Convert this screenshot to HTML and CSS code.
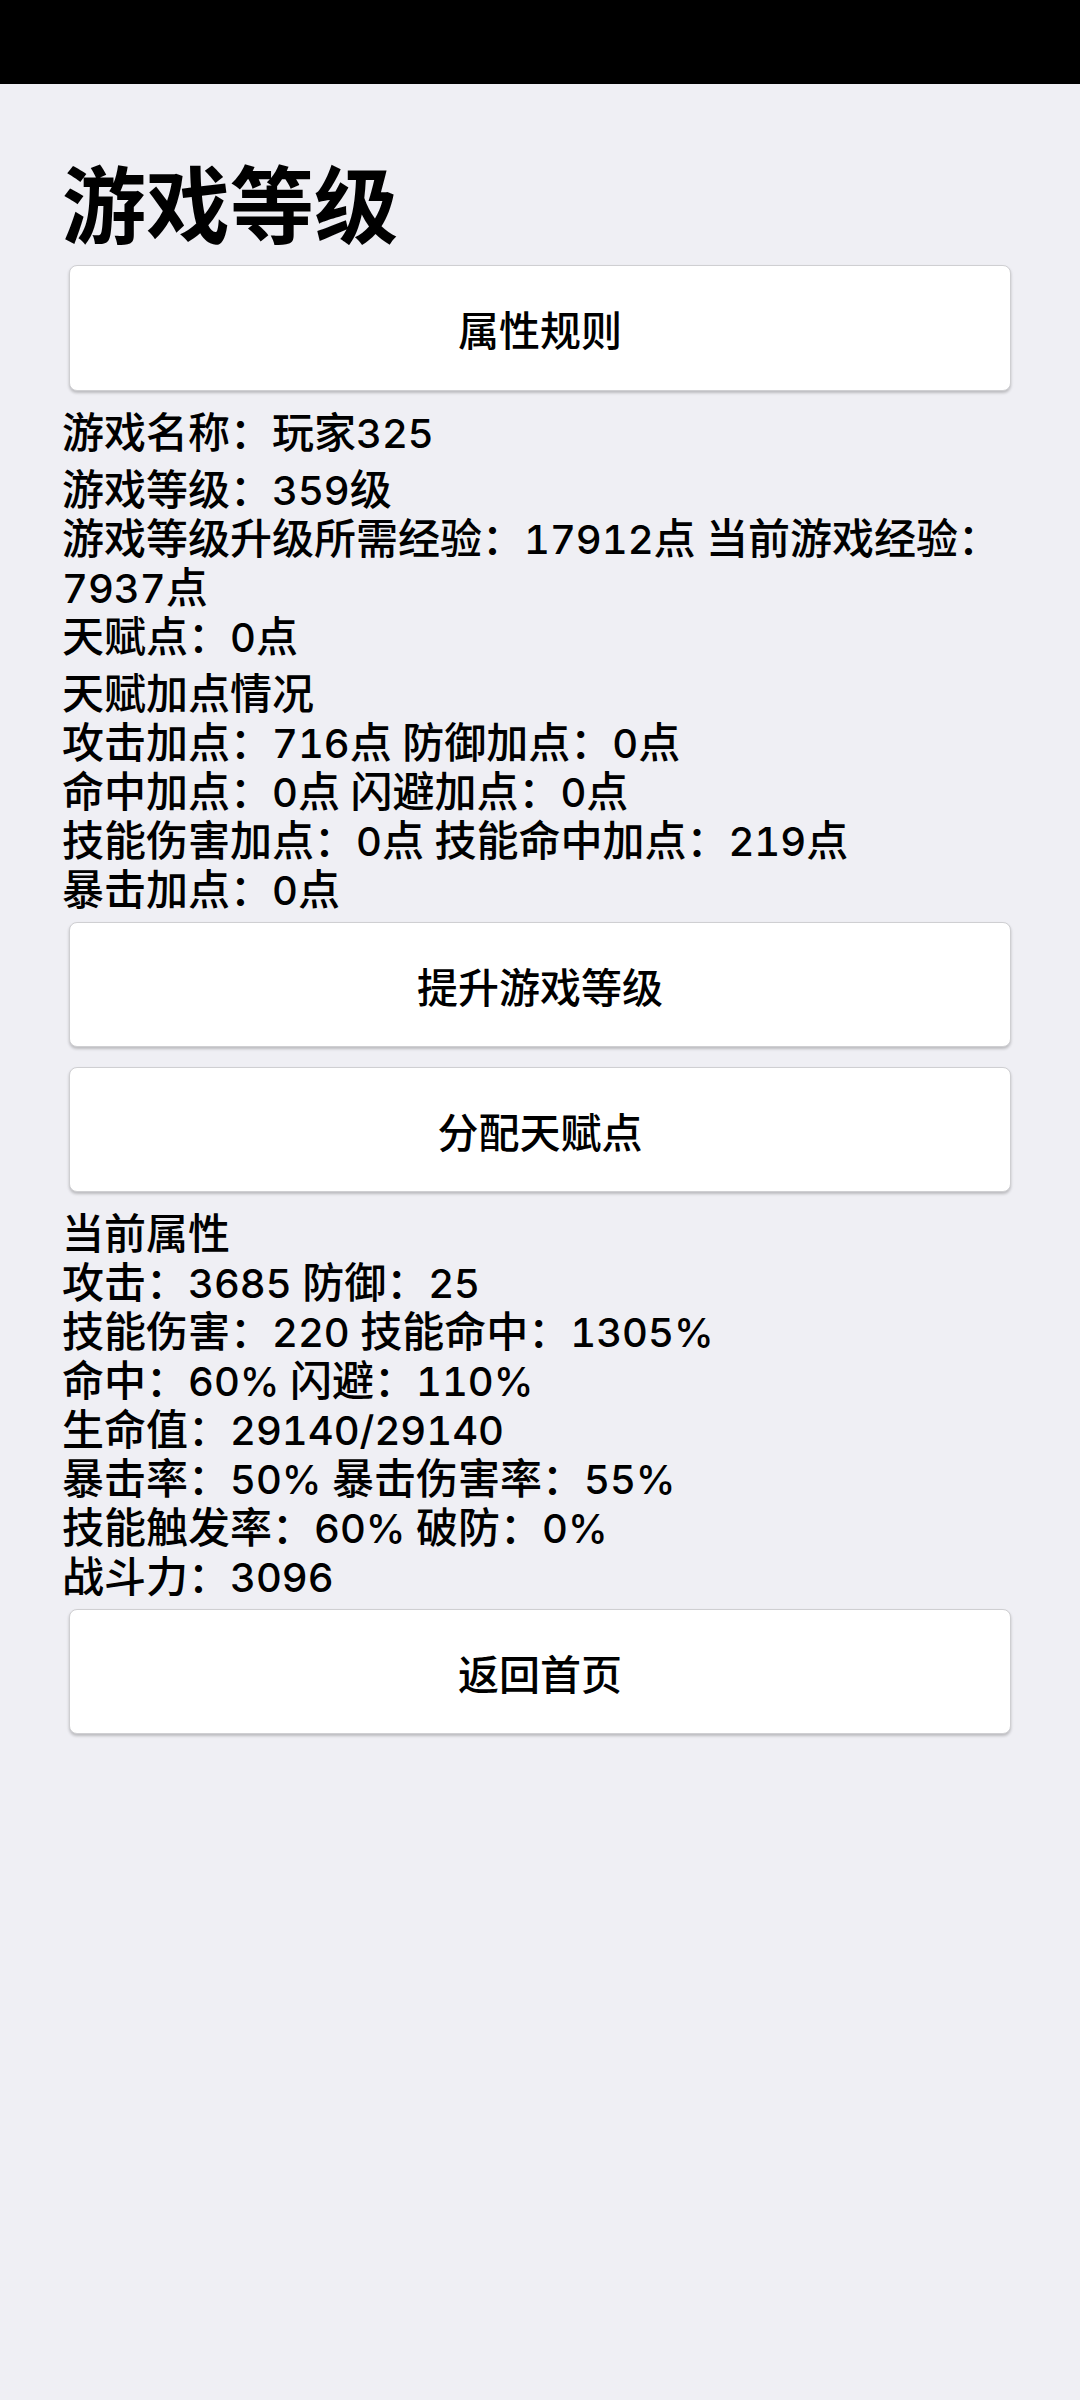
FILE: index.html
```html
<!DOCTYPE html>
<html lang="zh-CN">
<head>
<meta charset="utf-8">
<title>游戏等级</title>
<link rel="stylesheet" href="styles.css">
</head>
<body>
<div class="statusbar"></div>
<main class="page">
  <h1 class="title">游戏等级</h1>
  <button class="btn">属性规则</button>
  <p class="info">游戏名称：玩家<span class="n">325</span></p>
  <p class="info">游戏等级：<span class="n">359</span>级<br>游戏等级升级所需经验：<span class="n">17912</span>点 当前游戏经验：<span class="n">7937</span>点<br>天赋点：<span class="n">0</span>点</p>
  <p class="info">天赋加点情况<br>攻击加点：<span class="n">716</span>点 防御加点：<span class="n">0</span>点<br>命中加点：<span class="n">0</span>点 闪避加点：<span class="n">0</span>点<br>技能伤害加点：<span class="n">0</span>点 技能命中加点：<span class="n">219</span>点<br>暴击加点：<span class="n">0</span>点</p>
  <button class="btn">提升游戏等级</button>
  <button class="btn">分配天赋点</button>
  <p class="info">当前属性<br>攻击：<span class="n">3685</span> 防御：<span class="n">25</span><br>技能伤害：<span class="n">220</span> 技能命中：<span class="n">1305%</span><br>命中：<span class="n">60%</span> 闪避：<span class="n">110%</span><br>生命值：<span class="n">29140/29140</span><br>暴击率：<span class="n">50%</span> 暴击伤害率：<span class="n">55%</span><br>技能触发率：<span class="n">60%</span> 破防：<span class="n">0%</span><br>战斗力：<span class="n">3096</span></p>
  <button class="btn">返回首页</button>
</main>
</body>
</html>
```

FILE: styles.css
```css
html, body {
  margin: 0;
  padding: 0;
  background: #efeff4;
}

body {
  min-height: 2400px;
  font-family: "Noto Sans CJK SC", "Noto Sans", sans-serif;
  color: #000;
}

.statusbar {
  height: 84px;
  background: #000;
}

.page {
  display: flex;
  flex-direction: column;
  padding: 69px 62px 0;
}

.title {
  margin: 0;
  font-size: 84px;
  line-height: 96px;
  font-weight: 700;
}

.btn {
  box-sizing: border-box;
  height: 125px;
  margin: 7px 7px 0;
  padding: 0;
  background: #fff;
  border: 1px solid #cfcfd2;
  border-radius: 8px;
  box-shadow: 0 2px 3px rgba(0, 0, 0, 0.22);
  font-family: "Noto Sans CJK SC", "Noto Sans", sans-serif;
  font-size: 41px;
  line-height: 48px;
  font-weight: 500;
  color: #000;
}

.title + .btn {
  margin-top: 16px;
  height: 126px;
}

.btn + .btn {
  margin-top: 20px;
}

.info {
  margin: 8px 0 0;
  font-family: Roboto, "Noto Sans CJK SC", sans-serif;
  font-size: 42px;
  line-height: 49px;
  font-weight: 500;
}

.btn + .info {
  margin-top: 18px;
}

.n {
  font-family: Inter, Roboto, sans-serif;
  font-size: 40px;
  font-weight: 500;
  font-variant-numeric: tabular-nums;
  line-height: 1;
}
```
